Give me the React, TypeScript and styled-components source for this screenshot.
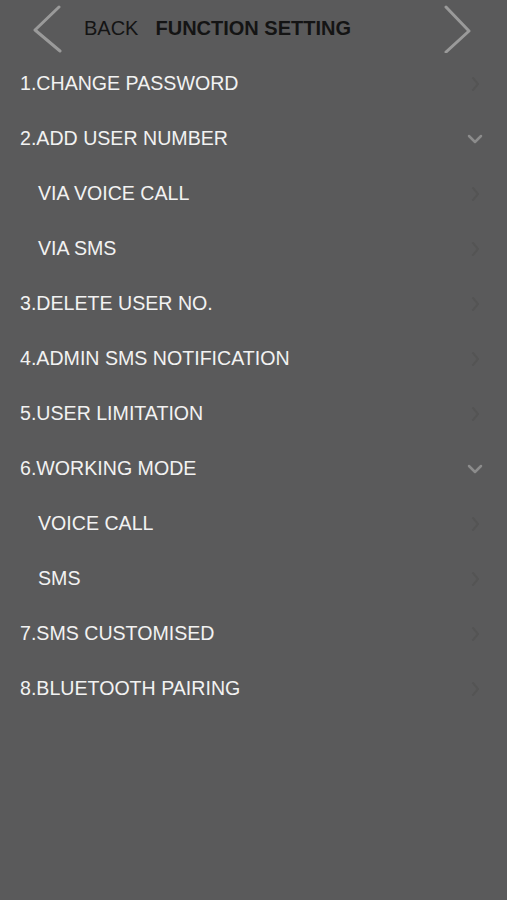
import React from "react";
import styled, { createGlobalStyle } from "styled-components";

const GlobalStyle = createGlobalStyle`
  html, body {
    margin: 0;
    padding: 0;
    background: #5a5a5b;
  }
  body {
    font-family: "Liberation Sans", Arial, sans-serif;
  }
`;

const Screen = styled.div`
  width: 507px;
  height: 900px;
  background: #5a5a5b;
  display: flex;
  flex-direction: column;
  overflow: hidden;
`;

const Header = styled.div`
  height: 56px;
  display: flex;
  align-items: center;
  padding: 0 31px 0 32px;
`;

const NavButton = styled.button`
  width: 32px;
  height: 50px;
  padding: 0;
  border: none;
  background: none;
  display: flex;
  align-items: center;
  justify-content: center;
  margin-top: -1px;
`;

const TitleGroup = styled.div`
  flex: 1;
  display: flex;
  align-items: center;
  gap: 17px;
  padding-left: 20px;
`;

const BackLabel = styled.span`
  font-size: 20px;
  color: #141414;
`;

const Title = styled.span`
  font-size: 20px;
  font-weight: bold;
  color: #141414;
`;

const List = styled.div`
  display: flex;
  flex-direction: column;
`;

const Row = styled.div<{ $sub?: boolean }>`
  height: 55px;
  display: flex;
  align-items: center;
  justify-content: space-between;
  padding: 0 24px 0 ${(p) => (p.$sub ? 38 : 20)}px;
`;

const Label = styled.span`
  font-size: 19.6px;
  color: #f2f2f2;
`;

const Chevron = styled.svg`
  display: block;
`;

function LeftArrow() {
  return (
    <Chevron width="32" height="50" viewBox="0 0 32 50">
      <polyline
        points="27,4 3,27 28,48"
        fill="none"
        stroke="#9a9a9a"
        strokeWidth="3"
        strokeLinecap="round"
        strokeLinejoin="round"
      />
    </Chevron>
  );
}

function RightArrow() {
  return (
    <Chevron width="32" height="50" viewBox="0 0 32 50">
      <polyline
        points="2,4 25,28 2,49"
        fill="none"
        stroke="#9a9a9a"
        strokeWidth="3"
        strokeLinecap="round"
        strokeLinejoin="round"
      />
    </Chevron>
  );
}

function RowArrow({ open }: { open?: boolean }) {
  if (open) {
    return (
      <Chevron width="16" height="12" viewBox="0 0 16 12">
        <polyline
          points="2,3 8,9 14,3"
          fill="none"
          stroke="#8c8c8c"
          strokeWidth="2.5"
          strokeLinecap="round"
          strokeLinejoin="round"
        />
      </Chevron>
    );
  }
  return (
    <Chevron width="16" height="16" viewBox="0 0 16 16">
      <polyline
        points="6,2 11,8 6,14"
        fill="none"
        stroke="#545454"
        strokeWidth="2"
        strokeLinecap="round"
        strokeLinejoin="round"
      />
    </Chevron>
  );
}

const items: { label: string; sub?: boolean; open?: boolean }[] = [
  { label: "1.CHANGE PASSWORD" },
  { label: "2.ADD USER NUMBER", open: true },
  { label: "VIA VOICE CALL", sub: true },
  { label: "VIA SMS", sub: true },
  { label: "3.DELETE USER NO." },
  { label: "4.ADMIN SMS NOTIFICATION" },
  { label: "5.USER LIMITATION" },
  { label: "6.WORKING MODE", open: true },
  { label: "VOICE CALL", sub: true },
  { label: "SMS", sub: true },
  { label: "7.SMS CUSTOMISED" },
  { label: "8.BLUETOOTH PAIRING" },
];

export default function App() {
  return (
    <Screen>
      <GlobalStyle />
      <Header>
        <NavButton>
          <LeftArrow />
        </NavButton>
        <TitleGroup>
          <BackLabel>BACK</BackLabel>
          <Title>FUNCTION SETTING</Title>
        </TitleGroup>
        <NavButton>
          <RightArrow />
        </NavButton>
      </Header>
      <List>
        {items.map((item) => (
          <Row key={item.label} $sub={item.sub}>
            <Label>{item.label}</Label>
            <RowArrow open={item.open} />
          </Row>
        ))}
      </List>
    </Screen>
  );
}
